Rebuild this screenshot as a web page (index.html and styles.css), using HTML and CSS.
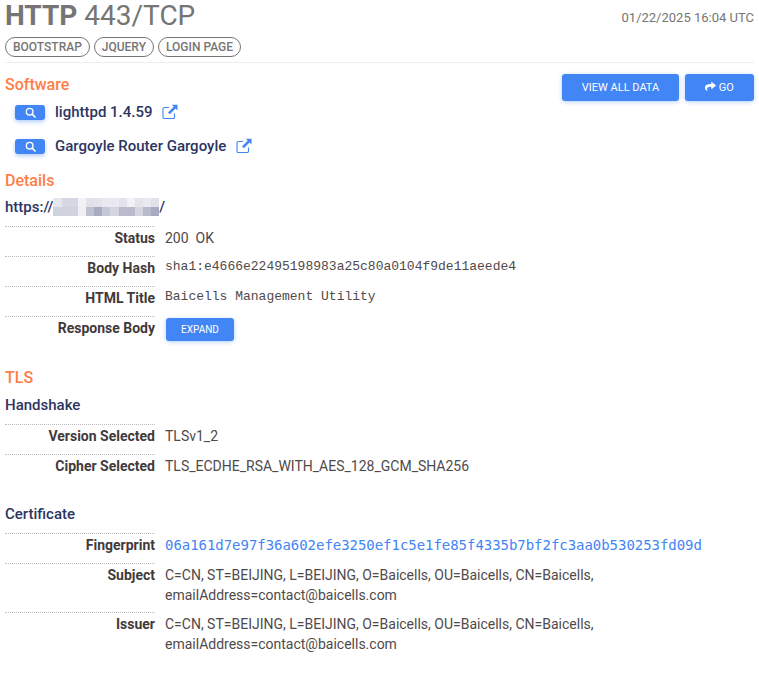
FILE: index.html
```html
<!DOCTYPE html>
<html lang="en">
<head>
    <meta charset="UTF-8">
    <meta name="viewport" content="width=device-width, initial-scale=1.0">
    <title>HTTP 443/TCP</title>
    <link rel="stylesheet" href="styles.css">
</head>
<body>
    <div class="container">
        <!-- Header -->
        <div class="header">
            <div>
                <h1 class="port-title"><strong>HTTP</strong> 443/TCP</h1>
                <div class="tags">
                    <span class="tag">BOOTSTRAP</span>
                    <span class="tag">JQUERY</span>
                    <span class="tag">LOGIN PAGE</span>
                </div>
            </div>
            <div class="timestamp">01/22/2025 16:04 UTC</div>
        </div>

        <!-- Software -->
        <div class="software">
            <div class="actions">
                <button type="button" class="btn btn-data">VIEW ALL DATA</button>
                <button type="button" class="btn btn-go">
                    <svg class="go-icon" viewBox="0 30 512 460" preserveAspectRatio="none"><path fill="currentColor" d="M503.7 189.8 327.7 37.9C312.3 24.6 288 35.4 288 56v80.1C127.4 137.9 0 170.1 0 322.3c0 61.4 39.6 122.3 83.3 154.1 13.7 9.9 33.1-2.5 28.1-18.6C66 312.3 132.9 274.3 288 272.1V360c0 20.7 24.3 31.4 39.7 18.2l176-152c11.1-9.6 11.1-26.8 0-36.4z"/></svg>
                    GO
                </button>
            </div>
            <h2 class="section-title">Software</h2>
            <div class="software-row">
                <span class="search-btn">
                    <svg class="search-icon" viewBox="0 0 16 16"><circle cx="6.8" cy="6.8" r="4.8" fill="none" stroke="currentColor" stroke-width="2"/><path d="M10.4 10.4 14.6 14.6" stroke="currentColor" stroke-width="2.4" stroke-linecap="round"/></svg>
                </span>
                <span class="software-name">lighttpd 1.4.59</span>
                <svg class="ext-icon" viewBox="0 0 16 16"><path d="M12.5 9.5v3.7a1.3 1.3 0 0 1-1.3 1.3H2.3A1.3 1.3 0 0 1 1 13.200V4.800a1.300 1.300 0 0 1 1.300-1.300H7" fill="none" stroke="currentColor" stroke-width="1.100"/><path d="M9.800 0.800H15.500V6.500L13.500 4.600 7.800 10.300 6 8.500 11.700 2.800Z" fill="currentColor"/></svg>
            </div>
            <div class="software-row">
                <span class="search-btn">
                    <svg class="search-icon" viewBox="0 0 16 16"><circle cx="6.8" cy="6.8" r="4.8" fill="none" stroke="currentColor" stroke-width="2"/><path d="M10.4 10.4 14.6 14.6" stroke="currentColor" stroke-width="2.4" stroke-linecap="round"/></svg>
                </span>
                <span class="software-name">Gargoyle Router Gargoyle</span>
                <svg class="ext-icon" viewBox="0 0 16 16"><path d="M12.5 9.5v3.7a1.3 1.3 0 0 1-1.3 1.3H2.3A1.3 1.3 0 0 1 1 13.200V4.800a1.300 1.300 0 0 1 1.300-1.300H7" fill="none" stroke="currentColor" stroke-width="1.100"/><path d="M9.800 0.800H15.500V6.500L13.500 4.600 7.800 10.300 6 8.500 11.700 2.800Z" fill="currentColor"/></svg>
            </div>
        </div>

        <!-- Details -->
        <h2 class="section-title details-title">Details</h2>
        <div class="url-line">
            <span>https://</span><span class="pixelated">
                <i class="p1"></i><i class="p2"></i><i class="p2"></i><i class="p3"></i><i class="p4"></i><i class="p5"></i><i class="p6"></i><i class="p6"></i><i class="p5"></i><i class="p3"></i><i class="p5"></i><i class="p6"></i><i class="p4"></i>
                <i class="q1"></i><i class="q1"></i><i class="q1"></i><i class="q2"></i><i class="q3"></i><i class="q4"></i><i class="q5"></i><i class="q6"></i><i class="q7"></i><i class="q7"></i><i class="q6"></i><i class="q7"></i><i class="q4"></i>
            </span><span>/</span>
        </div>
        <div class="facts">
            <div class="fact"><div class="fact-label">Status</div><div class="fact-value">200&nbsp; OK</div></div>
            <div class="fact"><div class="fact-label">Body Hash</div><div class="fact-value mono">sha1:e4666e22495198983a25c80a0104f9de11aeede4</div></div>
            <div class="fact"><div class="fact-label">HTML Title</div><div class="fact-value mono">Baicells Management Utility</div></div>
            <div class="fact"><div class="fact-label">Response Body</div><div class="fact-value"><button type="button" class="btn btn-expand">EXPAND</button></div></div>
        </div>

        <!-- TLS -->
        <h2 class="section-title tls-title">TLS</h2>
        <h3 class="sub-title">Handshake</h3>
        <div class="facts sub-facts">
            <div class="fact"><div class="fact-label">Version Selected</div><div class="fact-value">TLSv1_2</div></div>
            <div class="fact"><div class="fact-label">Cipher Selected</div><div class="fact-value">TLS_ECDHE_RSA_WITH_AES_128_GCM_SHA256</div></div>
        </div>

        <h3 class="sub-title cert-title">Certificate</h3>
        <div class="facts sub-facts">
            <div class="fact"><div class="fact-label">Fingerprint</div><div class="fact-value mono-link">06a161d7e97f36a602efe3250ef1c5e1fe85f4335b7bf2fc3aa0b530253fd09d</div></div>
            <div class="fact fact-tall"><div class="fact-label">Subject</div><div class="fact-value">C=CN, ST=BEIJING, L=BEIJING, O=Baicells, OU=Baicells, CN=Baicells, emailAddress=contact@baicells.com</div></div>
            <div class="fact fact-tall"><div class="fact-label">Issuer</div><div class="fact-value">C=CN, ST=BEIJING, L=BEIJING, O=Baicells, OU=Baicells, CN=Baicells, emailAddress=contact@baicells.com</div></div>
        </div>
    </div>
</body>
</html>
```
FILE: styles.css
```css
/* General Body Styles */
body {
    font-family: 'Roboto', sans-serif;
    font-size: 14px;
    color: #423a3a;
    background: #fff;
    margin: 0;
    padding: 0;
}
.container {
    padding: 0 5px;
}

/* Header */
.header {
    display: flex;
    justify-content: space-between;
    border-bottom: 1px solid #eee;
    height: 62px;
}
.port-title {
    margin: 0;
    font-size: 28px;
    font-weight: 400;
    line-height: 32px;
    color: #757575;
}
.port-title strong {
    font-weight: 700;
}
.tags {
    display: flex;
    gap: 4px;
    margin-top: 5px;
}
.tag {
    border: 1px solid #757575;
    border-radius: 10px;
    height: 18px;
    line-height: 18px;
    padding: 0 7px;
    font-size: 12px;
    font-weight: 500;
    color: #757575;
}
.timestamp {
    font-size: 13px;
    color: #757575;
    line-height: 16px;
    margin-top: 10px;
}

/* Software */
.software {
    position: relative;
}
.actions {
    float: right;
    display: flex;
    gap: 6px;
    margin-top: 11px;
}
.btn {
    border: none;
    border-radius: 3px;
    background-color: #4285f4;
    color: #fff;
    font-family: 'Roboto', sans-serif;
    font-size: 11px;
    height: 27px;
    padding: 0;
    box-shadow: 0 1px 4px rgba(66, 133, 244, 0.4);
}
.btn-data {
    width: 117px;
}
.btn-go {
    width: 69px;
}
.go-icon {
    width: 11px;
    height: 9px;
}
.section-title {
    margin: 0;
    font-size: 16px;
    font-weight: 500;
    line-height: 20px;
    color: #ff7e47;
}
.software .section-title {
    padding-top: 12px;
}
.software-row {
    display: flex;
    align-items: center;
    height: 34px;
    padding-left: 10px;
}
.search-btn {
    display: flex;
    align-items: center;
    justify-content: center;
    width: 30px;
    height: 15px;
    border-radius: 3px;
    background-color: #4285f4;
    color: #fff;
    box-shadow: 0 2px 4px rgba(66, 133, 244, 0.4);
}
.search-icon {
    width: 11px;
    height: 11px;
}
.software-name {
    margin-left: 10px;
    font-size: 15px;
    font-weight: 500;
    color: #2c3561;
}
.ext-icon {
    width: 16px;
    height: 16px;
    margin-left: 9.5px;
    color: #4285f4;
}

/* Details */
.details-title {
    margin-top: 8px;
}
.url-line {
    display: flex;
    align-items: center;
    height: 32px;
    font-weight: 500;
    font-size: 15px;
    color: #2c3561;
}
.pixelated {
    display: grid;
    grid-template-columns: repeat(13, 8.15px);
    grid-template-rows: 9px 9px;
}
.p1 { background: #e6e6ee; }
.p2 { background: #d5d7e2; }
.p3 { background: #f2f2f6; }
.p4 { background: #e0e1e9; }
.p5 { background: #e3e4eb; }
.p6 { background: #e9e9ef; }
.q1 { background: #d0d2dd; }
.q2 { background: #f0f0f4; }
.q3 { background: #bfc1d1; }
.q4 { background: #a8abc2; }
.q5 { background: #c5c7d5; }
.q6 { background: #d3d5e0; }
.q7 { background: #b9bbcd; }

/* Fact rows */
.facts {
    margin-top: 3px;
}
.sub-facts {
    margin-top: 9px;
}
.fact {
    display: flex;
    min-height: 30px;
}
.fact-label {
    box-sizing: border-box;
    flex: 0 0 150px;
    border-top: 1px dotted #bbb;
    padding-top: 1px;
    line-height: 20px;
    text-align: right;
    font-weight: 700;
}
.fact-value {
    padding: 2px 0 0 10px;
    line-height: 20px;
    flex: 1;
    color: #4f4a4a;
}
.fact-tall .fact-value {
    padding-bottom: 7px;
    max-width: 460px;
}
.mono {
    font-family: 'Liberation Mono', monospace;
    font-size: 13px;
    padding-top: 1px;
}
.mono-link {
    font-family: 'DejaVu Sans Mono', monospace;
    font-size: 14px;
    letter-spacing: -0.04px;
    color: #4285f4;
}
.btn-expand {
    width: 68px;
    height: 23px;
    font-size: 10px;
    margin: 0 0 0 1px;
    display: block;
}

/* TLS */
.tls-title {
    margin-top: 22px;
}
.sub-title {
    margin: 7px 0 0;
    font-size: 15px;
    font-weight: 500;
    line-height: 20px;
    color: #2c3561;
}
.cert-title {
    margin-top: 20px;
}
```
